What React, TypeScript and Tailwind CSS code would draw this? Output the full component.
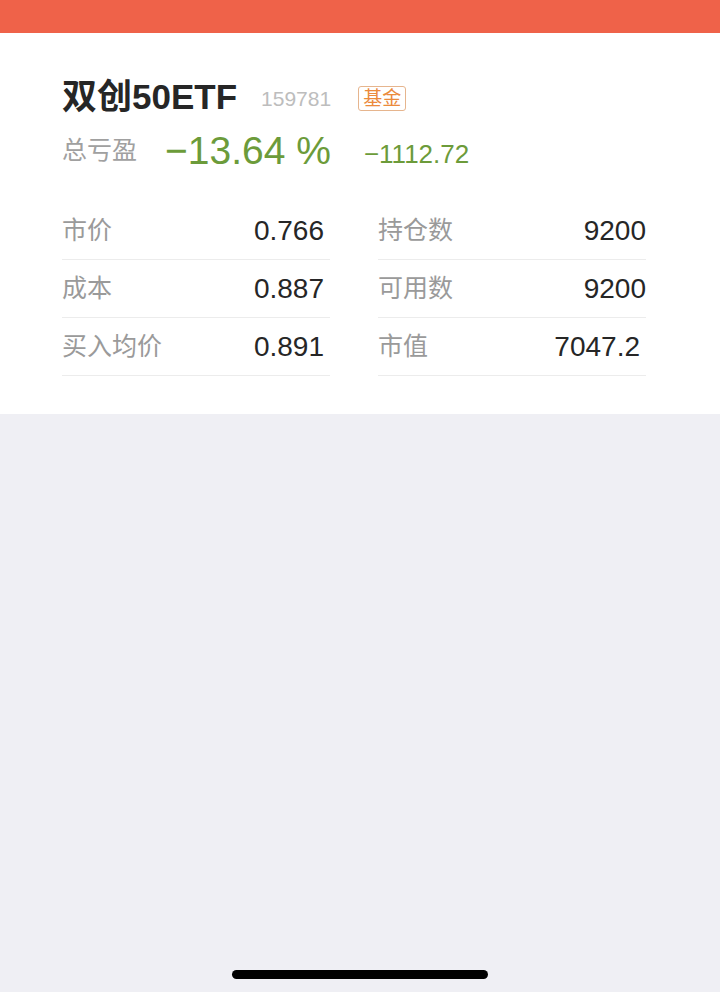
const font = { fontFamily: '"Helvetica Neue", "Liberation Sans", "Noto Sans CJK SC", sans-serif' };

const left = [
  ["市价", "0.766"],
  ["成本", "0.887"],
  ["买入均价", "0.891"],
];
const right = [
  ["持仓数", "9200"],
  ["可用数", "9200"],
  ["市值", "7047.2"],
];

function Column({ rows, pr }: { rows: string[][]; pr: string }) {
  return (
    <div className="w-[268px]">
      {rows.map(([label, value], i) => (
        <div key={label} className="flex h-[58px] items-center justify-between border-b border-[#ececec]">
          <span className="text-[25px] text-[#9a9a9a]">{label}</span>
          <span className={`text-[28px] text-[#262626] ${i === 2 && pr === "pr-0" ? "pr-[6px]" : pr}`}>{value}</span>
        </div>
      ))}
    </div>
  );
}

export default function App() {
  return (
    <div className="relative flex h-[992px] w-[720px] flex-col bg-[#efeff4]" style={font}>
      <div className="h-[33px] bg-[#ef6249]" />
      <div className="bg-white pb-[38px] pl-[62px] pt-[40px]">
        <div className="flex items-center">
          <span className="text-[35px] font-semibold leading-[48px] text-[#262626]">双创50ETF</span>
          <span className="ml-[24px] mt-[4px] text-[21px] text-[#bdbdbd]">159781</span>
          <span className="ml-[27px] mt-[2px] rounded-[3px] border border-[#e6b58e] px-[4px] text-[19px] leading-[23px] text-[#eb8a3c]">
            基金
          </span>
        </div>
        <div className="mt-[5px] flex items-center">
          <span className="text-[25px] text-[#a0a0a0]">总亏盈</span>
          <span className="ml-[28px] text-[39px] leading-[50px] text-[#6c9b3a]">−13.64 %</span>
          <span className="ml-[33px] mt-[6px] text-[26px] text-[#6c9b3a]">−1112.72</span>
        </div>
        <div className="mt-[26px] flex gap-[48px]">
          <Column rows={left} pr="pr-[6px]" />
          <Column rows={right} pr="pr-0" />
        </div>
      </div>
      <div className="flex-1" />
      <div className="mb-[13px] flex justify-center">
        <div className="h-[9px] w-[256px] rounded-full bg-black" />
      </div>
    </div>
  );
}
